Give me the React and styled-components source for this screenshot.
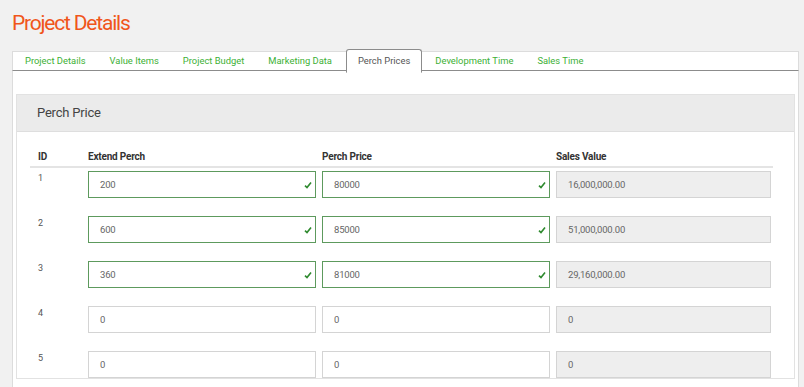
import React from 'react';
import styled, { createGlobalStyle } from 'styled-components';

const GlobalStyle = createGlobalStyle`
  html, body {
    margin: 0;
    padding: 0;
    background: #f1f1f1;
    font-family: Roboto, "Liberation Sans", sans-serif;
  }
`;

const Page = styled.div`
  padding: 0 5px 0 12px;
  height: 387px;
  overflow: hidden;
`;

const Title = styled.h1`
  margin: 0;
  padding-top: 11px;
  height: 49px;
  box-sizing: border-box;
  font-size: 21px;
  line-height: 24px;
  font-weight: 400;
  color: #f0561b;
  letter-spacing: -1.2px;
`;

const TabBar = styled.ul`
  list-style: none;
  margin: 2px 0 0;
  padding: 0;
  display: flex;
  height: 18px;
  background: #fff;
  border: 1px solid #dcdcdc;
  border-bottom: 1px solid #8c8c8c;
`;

const Tab = styled.li`
  padding: 0 12px;
  font-size: 9.4px;
  line-height: 18px;
  color: ${p => (p.active ? '#555' : '#3cb034')};
  ${p =>
    p.active &&
    `
    margin: -3px 1px 0 2px;
    line-height: 22px;
    height: 22px;
    padding: 0 11px;
    border: 1px solid #8c8c8c;
    border-bottom-color: #fff;
    border-radius: 3px 3px 0 0;
    background: #fff;
  `}
`;

const TabContent = styled.div`
  background: #fff;
  border-left: 1px solid #dcdcdc;
  border-right: 1px solid #dcdcdc;
  padding: 23px 3px 0;
  height: 400px;
`;

const Card = styled.div`
  border: 1px solid #e2e2e2;
  background: #fff;
`;

const CardHeader = styled.div`
  height: 36px;
  background: #ebebeb;
  border-bottom: 1px solid #dedede;
  padding-left: 20px;
  font-size: 13px;
  letter-spacing: -0.2px;
  line-height: 36px;
  color: #444;
`;

const CardBody = styled.div`
  padding: 18px 21px 0 13px;
`;

const Grid = styled.div`
  display: grid;
  grid-template-columns: 44px 228px 228px 215px;
  column-gap: 6px;
  padding: 0 2px 0 8px;
`;

const HeadRow = styled(Grid)`
  height: 16px;
  border-bottom: 2px solid #e4e4e4;
  font-size: 10px;
  font-weight: 700;
  letter-spacing: -0.2px;
  color: #333;
  line-height: 14px;
`;

const Row = styled(Grid)`
  margin-top: ${p => (p.first ? '3px' : '18px')};
  height: 27px;
`;

const IdCell = styled.div`
  font-size: 9px;
  color: #555;
  padding-top: 2px;
`;

const Field = styled.div`
  position: relative;
  height: 27px;
  box-sizing: border-box;
  border: 1px solid ${p => (p.valid ? '#5d9a5d' : '#d4d4d4')};
  background: ${p => (p.readOnly ? '#eeeeee' : '#fff')};
  padding-left: 11px;
  font-size: 9.5px;
  letter-spacing: -0.2px;
  line-height: 25px;
  color: #666;
`;

const Check = styled.svg`
  position: absolute;
  right: 3px;
  top: 9px;
  width: 8px;
  height: 8px;
`;

const rows = [
  { id: 1, extend: '200', price: '80000', valid: true },
  { id: 2, extend: '600', price: '85000', valid: true },
  { id: 3, extend: '360', price: '81000', valid: true },
  { id: 4, extend: '0', price: '0', valid: false },
  { id: 5, extend: '0', price: '0', valid: false },
];

const tabs = ['Project Details', 'Value Items', 'Project Budget', 'Marketing Data', 'Perch Prices', 'Development Time', 'Sales Time'];

const fmt = (n) =>
  n === 0 ? '0' : n.toLocaleString('en-US', { minimumFractionDigits: 2, maximumFractionDigits: 2 });

const Tick = () => (
  <Check viewBox="0 0 8 8">
    <path d="M1 4.6 L3 6.6 L7 1.4" fill="none" stroke="#2f8a2f" strokeWidth="1.6" />
  </Check>
);

const Input = ({ value, valid, readOnly }) => (
  <Field valid={valid} readOnly={readOnly}>
    {value}
    {valid && <Tick />}
  </Field>
);

const App = () => (
  <Page>
    <GlobalStyle />
    <Title>Project Details</Title>
    <TabBar>
      {tabs.map((t) => (
        <Tab key={t} active={t === 'Perch Prices'}>{t}</Tab>
      ))}
    </TabBar>
    <TabContent>
      <Card>
        <CardHeader>Perch Price</CardHeader>
        <CardBody>
          <HeadRow>
            <div>ID</div>
            <div>Extend Perch</div>
            <div>Perch Price</div>
            <div>Sales Value</div>
          </HeadRow>
          {rows.map((r, i) => (
            <Row key={r.id} first={i === 0}>
              <IdCell>{r.id}</IdCell>
              <Input value={r.extend} valid={r.valid} />
              <Input value={r.price} valid={r.valid} />
              <Input value={fmt(Number(r.extend) * Number(r.price))} readOnly />
            </Row>
          ))}
        </CardBody>
      </Card>
    </TabContent>
  </Page>
);

export default App;
